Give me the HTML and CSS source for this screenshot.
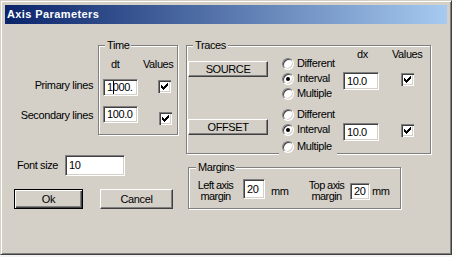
FILE: index.html
```html
<!DOCTYPE html>
<html>
<head>
<meta charset="utf-8">
<link rel="stylesheet" href="styles.css">
</head>
<body>
<div class="window">
  <div class="titlebar"><span class="title-text">Axis Parameters</span></div>
  <div class="client">
    <div class="col-left">
      <div class="time-section">
        <div class="row-labels">
          <div class="lbl lbl-primary">Primary lines</div>
          <div class="lbl lbl-secondary">Secondary lines</div>
        </div>
        <div class="group group-time">
          <div class="group-title">Time</div>
          <div class="time-head"><span class="h-dt">dt</span><span class="h-values">Values</span></div>
          <div class="time-row row1">
            <div class="edit edit-time">1<span class="caret"></span>000.</div>
            <span class="check chk-t1"><svg width="13" height="13" viewBox="0 0 13 13"><path d="M3 5h1v3h-1zM4 6h1v3h-1zM5 7h1v3h-1zM6 6h1v3h-1zM7 5h1v3h-1zM8 4h1v3h-1zM9 3h1v3h-1z" fill="#000"/></svg></span>
          </div>
          <div class="time-row row2">
            <div class="edit edit-time">100.0</div>
            <span class="check chk-t2"><svg width="13" height="13" viewBox="0 0 13 13"><path d="M3 5h1v3h-1zM4 6h1v3h-1zM5 7h1v3h-1zM6 6h1v3h-1zM7 5h1v3h-1zM8 4h1v3h-1zM9 3h1v3h-1z" fill="#000"/></svg></span>
          </div>
        </div>
      </div>
      <div class="font-row">
        <span class="lbl-font">Font size</span>
        <div class="edit edit-font">10</div>
      </div>
      <div class="btn-row">
        <div class="btn btn-default btn-ok">Ok</div>
        <div class="btn btn-cancel">Cancel</div>
      </div>
    </div>
    <div class="col-right">
      <div class="group group-traces">
        <div class="tcol tcol-btn">
          <div class="group-title">Traces</div>
          <div class="btn btn-src">SOURCE</div>
          <div class="btn btn-off">OFFSET</div>
        </div>
        <div class="tcol tcol-radio">
          <div class="radio-set set-a">
            <div class="radio-item"><span class="radio"></span>Different</div>
            <div class="radio-item"><span class="radio on"></span>Interval</div>
            <div class="radio-item"><span class="radio"></span>Multiple</div>
          </div>
          <div class="radio-set set-b">
            <div class="radio-item"><span class="radio"></span>Different</div>
            <div class="radio-item"><span class="radio on"></span>Interval</div>
            <div class="radio-item cover"><span class="radio"></span>Multiple</div>
          </div>
        </div>
        <div class="tcol tcol-dx">
          <div class="hdr hdr-dx">dx</div>
          <div class="edit edit-dx dx1">10.0</div>
          <div class="edit edit-dx dx2">10.0</div>
        </div>
        <div class="tcol tcol-val">
          <div class="hdr">Values</div>
          <span class="check chk-v1"><svg width="13" height="13" viewBox="0 0 13 13"><path d="M3 5h1v3h-1zM4 6h1v3h-1zM5 7h1v3h-1zM6 6h1v3h-1zM7 5h1v3h-1zM8 4h1v3h-1zM9 3h1v3h-1z" fill="#000"/></svg></span>
          <span class="check chk-v2"><svg width="13" height="13" viewBox="0 0 13 13"><path d="M3 5h1v3h-1zM4 6h1v3h-1zM5 7h1v3h-1zM6 6h1v3h-1zM7 5h1v3h-1zM8 4h1v3h-1zM9 3h1v3h-1z" fill="#000"/></svg></span>
        </div>
      </div>
      <div class="group group-margins">
        <div class="group-title">Margins</div>
        <div class="margins-row">
          <div class="mlabel mlabel-left"><span>Left axis</span><span>margin</span></div>
          <div class="edit edit-m m1">20</div>
          <span class="mm mm1">mm</span>
          <div class="mlabel mlabel-top"><span>Top axis</span><span>margin</span></div>
          <div class="edit edit-m m2">20</div>
          <span class="mm mm2">mm</span>
        </div>
      </div>
    </div>
  </div>
</div>
</body>
</html>
```

FILE: styles.css
```css
html, body {
  margin: 0;
  padding: 0;
  background: #f4f4f4;
}
.window {
  box-sizing: border-box;
  width: 452px;
  height: 255px;
  background: #d4d0c8;
  border: 1px solid;
  border-color: #d4d0c8 #404040 #404040 #d4d0c8;
  box-shadow: inset 1px 1px 0 #fff, inset -1px -1px 0 #808080;
  padding: 4px;
  display: flex;
  flex-direction: column;
  font-family: "Liberation Sans", Arial, sans-serif;
  font-size: 11px;
  line-height: 13px;
  letter-spacing: -0.4px;
  color: #000;
}
.titlebar {
  height: 19px;
  flex: none;
  background: linear-gradient(to right, #0a246a, #a6caf0);
  display: flex;
  align-items: center;
  padding-left: 2px;
}
.title-text {
  color: #fff;
  font-weight: bold;
  font-size: 11px;
  letter-spacing: 0.4px;
}
.client {
  flex: 1;
  display: flex;
}
.col-left {
  width: 181px;
  flex: none;
  display: flex;
  flex-direction: column;
}
.col-right {
  flex: 1;
  display: flex;
  flex-direction: column;
  margin-top: 21px;
}

/* group boxes */
.group {
  box-sizing: border-box;
  border: 1px solid #808080;
  box-shadow: inset 1px 1px 0 #fff, 1px 1px 0 #fff;
}
.group-title {
  width: max-content;
  margin: -7px 0 0 6px;
  padding: 0 2px;
  background: #d4d0c8;
  line-height: 13px;
}

/* edits */
.edit {
  box-sizing: border-box;
  background: #fff;
  border: 1px solid;
  border-color: #808080 #fff #fff #808080;
  box-shadow: inset 1px 1px 0 #404040, inset -1px -1px 0 #d4d0c8;
  padding-left: 3px;
  display: flex;
  align-items: center;
  overflow: hidden;
  white-space: nowrap;
  flex: none;
}
.caret {
  display: inline-block;
  width: 1px;
  height: 13px;
  background: #000;
  margin-right: -1px;
}

/* checkboxes */
.check {
  box-sizing: border-box;
  display: block;
  width: 13px;
  height: 13px;
  flex: none;
  background: #fff;
  box-shadow: inset 1px 1px 0 #808080, inset 2px 2px 0 #404040, inset -1px -1px 0 #fff, inset -2px -2px 0 #d4d0c8;
}
.check svg {
  display: block;
  shape-rendering: crispEdges;
}

/* buttons */
.btn {
  box-sizing: border-box;
  background: #d4d0c8;
  border: 1px solid;
  border-color: #fff #404040 #404040 #fff;
  box-shadow: inset -1px -1px 0 #808080;
  display: flex;
  align-items: center;
  justify-content: center;
  flex: none;
}
.btn-default {
  border-color: #000;
  box-shadow: inset 1px 1px 0 #fff, inset -1px -1px 0 #404040, inset -2px -2px 0 #808080;
}

/* radios */
.radio-item {
  display: flex;
  align-items: center;
  height: 15px;
  white-space: nowrap;
}
.radio {
  box-sizing: border-box;
  width: 12px;
  height: 12px;
  border-radius: 50%;
  margin-right: 3px;
  flex: none;
  background: #fff;
  border: 1px solid;
  border-color: #808080 #fff #fff #808080;
  box-shadow: inset 1px 1px 0 #404040, inset -1px -1px 0 #d4d0c8;
  display: flex;
  align-items: center;
  justify-content: center;
}
.radio.on::after {
  content: "";
  width: 4px;
  height: 4px;
  border-radius: 50%;
  background: #000;
}

/* left column */
.time-section {
  display: flex;
  margin-top: 21px;
}
.row-labels {
  width: 88px;
  text-align: right;
  flex: none;
}
.lbl-primary { margin-top: 34px; }
.lbl-secondary { margin-top: 17px; }
.group-time {
  width: 80px;
  height: 90px;
  margin-left: 5px;
  flex: none;
}
.time-head {
  display: flex;
  margin-top: 6px;
}
.h-dt {
  width: 20px;
  padding-left: 12px;
}
.h-values {
  padding-left: 12px;
}
.time-row {
  display: flex;
  align-items: flex-start;
}
.row1 { margin-top: 8px; }
.row2 { margin-top: 10px; }
.edit-time {
  width: 35px;
  height: 17px;
  margin-left: 4px;
}
.chk-t1 { margin-left: 20px; margin-top: 1px; }
.chk-t2 { margin-left: 21px; margin-top: 6px; }

.font-row {
  display: flex;
  align-items: center;
  margin-top: 20px;
}
.lbl-font {
  width: 48px;
  margin-left: 12px;
}
.edit-font {
  width: 60px;
  height: 21px;
}
.btn-row {
  display: flex;
  margin-top: 13px;
}
.btn-ok {
  width: 69px;
  height: 20px;
  margin-left: 9px;
}
.btn-cancel {
  width: 73px;
  height: 20px;
  margin-left: 17px;
}

/* traces */
.group-traces {
  width: 245px;
  height: 109px;
  display: flex;
  align-items: flex-start;
}
.tcol {
  display: flex;
  flex-direction: column;
  align-items: flex-start;
  flex: none;
}
.tcol-btn {
  width: 80px;
  margin-left: 1px;
}
.tcol-btn .group-title {
  margin-left: 5px;
}
.btn-src, .btn-off {
  width: 80px;
  height: 16px;
}
.btn-src { margin-top: 9px; }
.btn-off { margin-top: 42px; }
.tcol-radio {
  width: 61px;
  margin-left: 14px;
}
.set-a { margin-top: 10px; }
.set-b { margin-top: 6px; }
.radio-item.cover {
  margin-top: 2px;
  margin-left: -3px;
  padding-left: 3px;
  padding-bottom: 2px;
  width: 55px;
  background: #d4d0c8;
}
.tcol-dx { width: 36px; }
.hdr { margin-top: 2px; }
.hdr-dx { padding-left: 14px; }
.edit-dx {
  width: 36px;
  height: 18px;
}
.dx1 { margin-top: 11px; }
.dx2 { margin-top: 33px; }
.tcol-val { margin-left: 13px; }
.chk-v1 { margin-left: 9px; margin-top: 12px; }
.chk-v2 { margin-left: 9px; margin-top: 38px; }

/* margins */
.group-margins {
  width: 213px;
  height: 42px;
  margin-top: 13px;
  margin-left: 2px;
}
.group-margins .group-title {
  margin-left: 7px;
}
.margins-row {
  display: flex;
  align-items: flex-start;
}
.mlabel {
  display: flex;
  flex-direction: column;
  align-items: center;
  white-space: nowrap;
  line-height: 11px;
  margin-top: 6px;
  flex: none;
  letter-spacing: -0.6px;
}
.mlabel-left {
  width: 37px;
  margin-left: 8px;
}
.m1 {
  width: 22px;
  height: 20px;
  margin-left: 9px;
  margin-top: 5px;
}
.mm {
  width: 18px;
  margin-top: 11px;
  flex: none;
}
.mm1 { margin-left: 6px; }
.mlabel-top {
  width: 43px;
  margin-left: 16px;
}
.m2 {
  width: 20px;
  height: 17px;
  margin-left: 2px;
  margin-top: 9px;
}
.mm2 { margin-left: 2px; }
```
